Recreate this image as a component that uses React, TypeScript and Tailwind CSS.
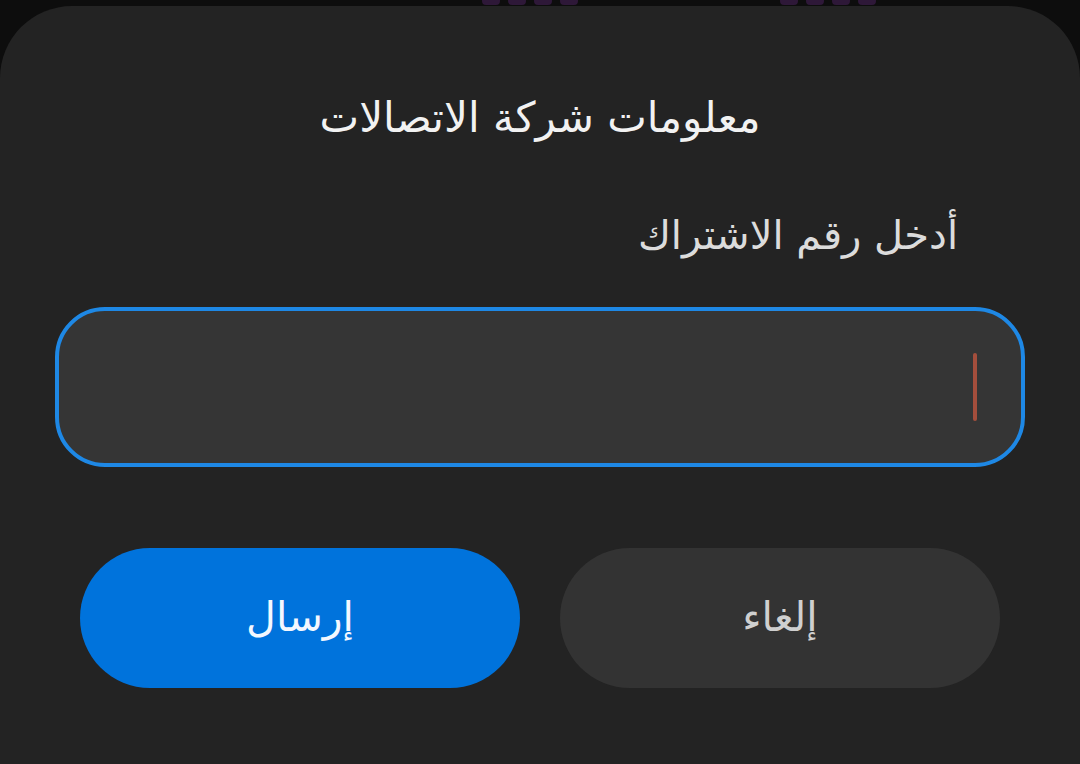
const dots = [0, 1, 2, 3];

export default function App() {
  return (
    <div
      className="flex h-[764px] w-[1080px] flex-col overflow-hidden bg-[#0d0d0d]"
      style={{ fontFamily: '"DejaVu Sans", "Noto Sans", sans-serif' }}
    >
      {/* status bar digits peeking from behind the sheet */}
      <div className="flex h-[6px] shrink-0 items-start overflow-hidden">
        <div className="ml-[482px] flex gap-[8px]">
          {dots.map((d) => (
            <span key={d} className="-mt-[3px] h-[8px] w-[18px] rounded-full bg-[#2e1838]" />
          ))}
        </div>
        <div className="ml-[202px] flex gap-[8px]">
          {dots.map((d) => (
            <span key={d} className="-mt-[3px] h-[8px] w-[18px] rounded-full bg-[#2e1838]" />
          ))}
        </div>
      </div>

      <div dir="rtl" className="flex flex-1 flex-col rounded-t-[72px] bg-[#232323]">
        <h1 className="mt-[88px] text-center text-[42px] font-normal leading-[48px] text-[#f2f2f2]">
          معلومات شركة الاتصالات
        </h1>

        <p className="mt-[69px] pr-[122px] text-[40px] leading-[48px] text-[#dcdcdc]">
          أدخل رقم الاشتراك
        </p>

        <div className="mx-[55px] mt-[48px] flex h-[160px] items-center rounded-[50px] border-[4px] border-[#1e88e5] bg-[#353535] pr-[44px]">
          <span className="h-[68px] w-[4px] rounded-sm bg-[#a44e3c]" />
        </div>

        <div className="mt-[81px] flex gap-[40px] px-[80px]">
          <button className="flex h-[140px] flex-1 items-center justify-center rounded-full bg-[#333333] text-[41px] text-[#cfcfcf]">
            إلغاء
          </button>
          <button className="flex h-[140px] flex-1 items-center justify-center rounded-full bg-[#0073dc] text-[41px] text-[#f4f8ff]">
            إرسال
          </button>
        </div>
      </div>
    </div>
  );
}
